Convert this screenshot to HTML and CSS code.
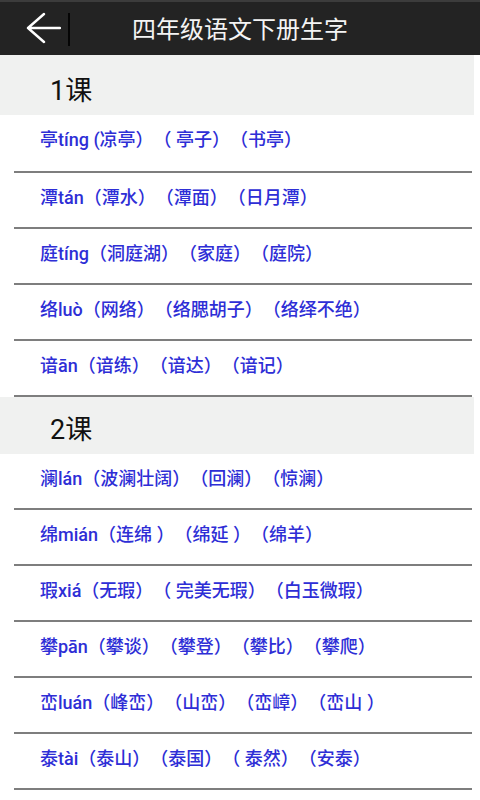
FILE: index.html
```html
<!DOCTYPE html>
<html lang="zh-CN">
<head>
<meta charset="utf-8">
<title>四年级语文下册生字</title>
<link rel="stylesheet" href="styles.css">
</head>
<body>
<header class="topbar">
  <div class="back">
    <svg class="back-icon" width="36" height="32" viewBox="0 0 36 32">
      <path d="M19 2 L3 16 L19 30 M3 16 L35 16" fill="none" stroke="#fff" stroke-width="2.4" stroke-linecap="round" stroke-linejoin="round"/>
    </svg>
    <span class="divider"></span>
  </div>
  <h1 class="title">四年级语文下册生字</h1>
</header>
<main class="list">
  <section class="lesson first">
    <h2 class="lesson-title">1课</h2>
    <p class="row">亭tíng (凉亭）（ 亭子）（书亭）</p>
    <p class="row">潭tán（潭水）（潭面）（日月潭）</p>
    <p class="row">庭tíng（洞庭湖）（家庭）（庭院）</p>
    <p class="row">络luò（网络）（络腮胡子）（络绎不绝）</p>
    <p class="row">谙ān（谙练）（谙达）（谙记）</p>
  </section>
  <section class="lesson">
    <h2 class="lesson-title">2课</h2>
    <p class="row">澜lán（波澜壮阔）（回澜）（惊澜）</p>
    <p class="row">绵mián（连绵 ）（绵延 ）（绵羊）</p>
    <p class="row">瑕xiá（无瑕）（ 完美无瑕）（白玉微瑕）</p>
    <p class="row">攀pān（攀谈）（攀登）（攀比）（攀爬）</p>
    <p class="row">峦luán（峰峦）（山峦）（峦嶂）（峦山 ）</p>
    <p class="row">泰tài（泰山）（泰国）（ 泰然）（安泰）</p>
  </section>
</main>
</body>
</html>
```
FILE: styles.css
```css
* { box-sizing: border-box; }
html, body {
  margin: 0;
  padding: 0;
  background: #ffffff;
  font-family: "Roboto", "Noto Sans CJK SC", sans-serif;
  text-spacing-trim: space-all;
}
.topbar {
  height: 55px;
  background: #232323;
  border-top: 2px solid #3c3c3c;
  display: flex;
  align-items: center;
}
.back {
  width: 76px;
  height: 100%;
  display: flex;
  align-items: center;
  padding-left: 25px;
}
.back-icon {
  display: block;
  margin-top: -1px;
}
.divider {
  width: 2px;
  height: 33px;
  background: #050505;
  margin-left: 7px;
  margin-top: 2px;
}
.title {
  margin: -2px 0 0 -76px;
  flex: 1;
  text-align: center;
  color: #f4f4f4;
  font-family: "Noto Sans CJK SC", sans-serif;
  font-weight: 400;
  font-size: 24px;
}
.list {
  margin: 0;
}
.lesson {
  margin: 0;
}
.lesson-title {
  margin: 0 6px 0 0;
  height: 57px;
  background: #f0f1f0;
  display: flex;
  align-items: center;
  padding-left: 50px;
  padding-top: 3px;
  font-size: 27px;
  font-weight: 400;
  color: #111;
}
.lesson.first .lesson-title {
  height: 60px;
  padding-top: 6px;
}
.row {
  margin: 0 8px 0 14px;
  height: 56px;
  border-bottom: 2px solid #7e7e7e;
  display: flex;
  align-items: center;
  padding-left: 26px;
  padding-bottom: 8px;
  font-size: 18px;
  font-weight: 500;
  color: #2e2ed6;
  white-space: pre;
  text-spacing-trim: space-all;
}
.lesson.first .row:nth-of-type(1) {
  height: 58px;
  padding-top: 0;
  padding-bottom: 10px;
}
```
